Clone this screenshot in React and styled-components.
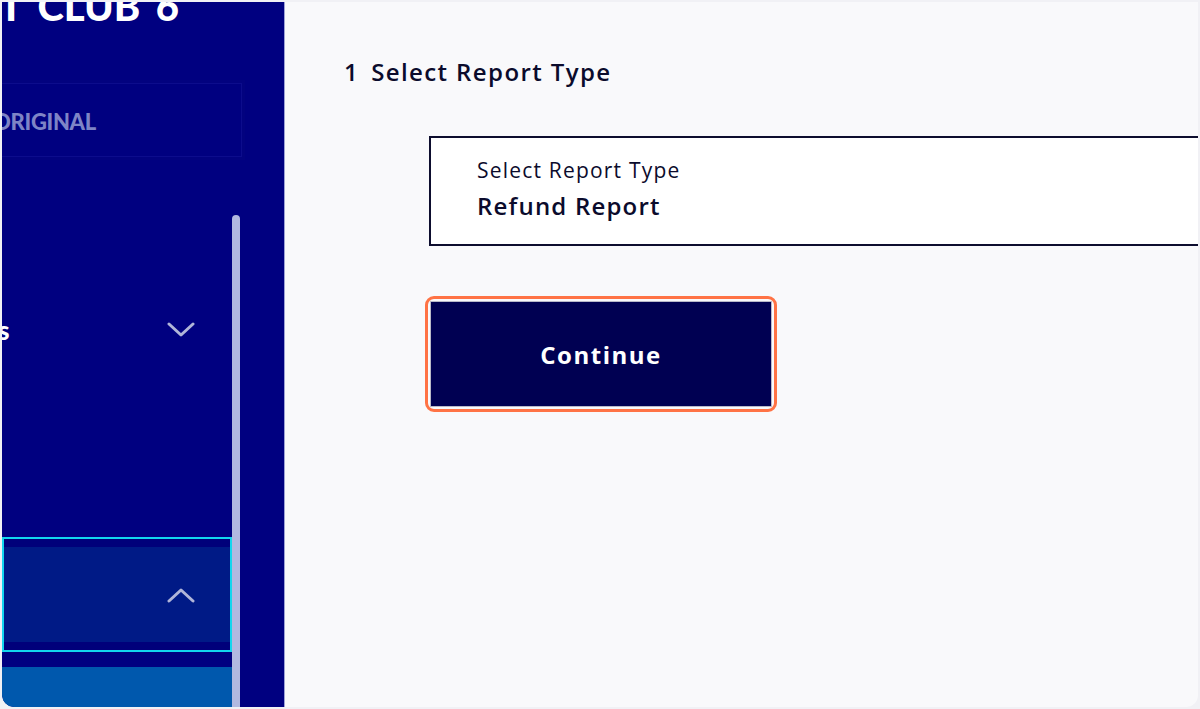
import styled, { createGlobalStyle } from "styled-components"

const GlobalStyle = createGlobalStyle`
  html, body {
    margin: 0;
    padding: 0;
    background: #f1f1f5;
    font-family: "Open Sans", Lato, sans-serif;
  }
  * { box-sizing: border-box; }
`

const Frame = styled.div`
  width: 1200px;
  height: 709px;
  padding: 2px;
`

const Window = styled.div`
  display: flex;
  height: 100%;
  border-radius: 0 0 12px 12px;
  overflow: hidden;
  background: #f9f9fb;
`

const Sidebar = styled.aside`
  width: 283px;
  flex-shrink: 0;
  background: #000080;
  border-right: 1px solid #9ea3d6;
  display: flex;
  flex-direction: column;
  overflow: hidden;
  border-bottom-left-radius: 12px;
`

const Logo = styled.div`
  font-family: Lato, sans-serif;
  font-weight: 900;
  font-size: 40px;
  color: #fff;
  white-space: nowrap;
  line-height: 1;
  margin: -16px 0 0 -3px;
  word-spacing: 6px;
  flex-shrink: 0;
`

const EditionBox = styled.div`
  margin: 57px 42px 0 -4px;
  height: 74px;
  border: 1px solid #0c0c8c;
  box-shadow: 0 0 0 3px #02027f;
  display: flex;
  align-items: center;
  flex-shrink: 0;
  padding-top: 3px;
`

const Edition = styled.span`
  font-family: Lato, sans-serif;
  font-weight: 900;
  font-size: 22px;
  color: #7e84c6;
  margin-left: -6px;
  letter-spacing: -0.3px;
`

const MenuArea = styled.div`
  flex: 1;
  display: flex;
  margin-top: 3px;
  min-height: 0;
`

const MenuList = styled.div`
  width: 230px;
  display: flex;
  flex-direction: column;
  & > * { flex-shrink: 0; }
`

const Scrollbar = styled.div`
  width: 8px;
  margin-top: 55px;
  border-radius: 4px 4px 0 0;
  background: #b1b8e0;
`

const MenuItem = styled.div`
  height: ${(p) => p.h}px;
  display: flex;
  align-items: center;
  justify-content: space-between;
  padding-right: 37px;
  color: #fff;
  font-family: Lato, sans-serif;
  font-weight: 900;
  font-size: 26px;
`

const Cut = styled.span`
  margin-left: -4px;
`

const Selected = styled.div`
  margin-top: 7px;
  border: 2px solid #12d6ee;
  padding: 8px 0;
  background: #00007a;
`

const SelectedInner = styled.div`
  height: 95px;
  background: #001a86;
  display: flex;
  align-items: center;
  justify-content: flex-end;
  padding-right: 35px;
`

const SubItem = styled.div`
  margin-top: 15px;
  height: 60px;
  background: #0058ad;
`

const Main = styled.main`
  flex: 1;
  overflow: hidden;
  padding: 55px 0 0 59px;
`

const StepTitle = styled.h2`
  margin: 0;
  display: flex;
  gap: 12px;
  font-size: 24px;
  line-height: 30px;
  font-weight: 600;
  color: #0b0b2c;
  letter-spacing: 1.4px;
`

const Body = styled.div`
  padding-left: 85px;
  margin-top: 49px;
`

const SelectBox = styled.div`
  width: 900px;
  height: 110px;
  background: #fff;
  border: 2px solid #0d0d2e;
  padding: 18px 46px;
`

const SelectLabel = styled.div`
  font-size: 21px;
  color: #0b0b2c;
  line-height: 28px;
  letter-spacing: 1.2px;
`

const SelectValue = styled.div`
  margin-top: 7px;
  font-size: 24px;
  font-weight: 600;
  color: #0b0b2c;
  line-height: 30px;
  letter-spacing: 1.2px;
`

const FocusRing = styled.div`
  display: inline-flex;
  margin: 50px 0 0 -4px;
  border: 3px solid #ff7345;
  border-radius: 9px;
  padding: 2px;
`

const ContinueButton = styled.button`
  width: 342px;
  height: 106px;
  background: #000052;
  border: 1px solid #b9b9c8;
  color: #fff;
  font-family: "Open Sans", sans-serif;
  font-weight: 700;
  font-size: 24px;
  letter-spacing: 1.5px;
  cursor: pointer;
`

const Chevron = ({ up }) => (
  <svg width="28" height="18" viewBox="0 0 28 18" fill="none">
    <path
      d={up ? "M2 15 L14 4 L26 15" : "M2 3 L14 14 L26 3"}
      stroke="#b0b5d8"
      strokeWidth="3"
      strokeLinecap="round"
      strokeLinejoin="round"
    />
  </svg>
)

export default function App() {
  return (
    <>
      <GlobalStyle />
      <Frame>
        <Window>
          <Sidebar>
            <Logo>T CLUB 6</Logo>
            <EditionBox>
              <Edition>ORIGINAL</Edition>
            </EditionBox>
            <MenuArea>
              <MenuList>
                <MenuItem h={60} />
                <MenuItem h={220}>
                  <Cut>s</Cut>
                  <Chevron />
                </MenuItem>
                <MenuItem h={90} />
                <Selected>
                  <SelectedInner>
                    <Chevron up />
                  </SelectedInner>
                </Selected>
                <SubItem />
              </MenuList>
              <Scrollbar />
            </MenuArea>
          </Sidebar>
          <Main>
            <StepTitle>
              <span>1</span>
              <span>Select Report Type</span>
            </StepTitle>
            <Body>
              <SelectBox>
                <SelectLabel>Select Report Type</SelectLabel>
                <SelectValue>Refund Report</SelectValue>
              </SelectBox>
              <FocusRing>
                <ContinueButton>Continue</ContinueButton>
              </FocusRing>
            </Body>
          </Main>
        </Window>
      </Frame>
    </>
  )
}
